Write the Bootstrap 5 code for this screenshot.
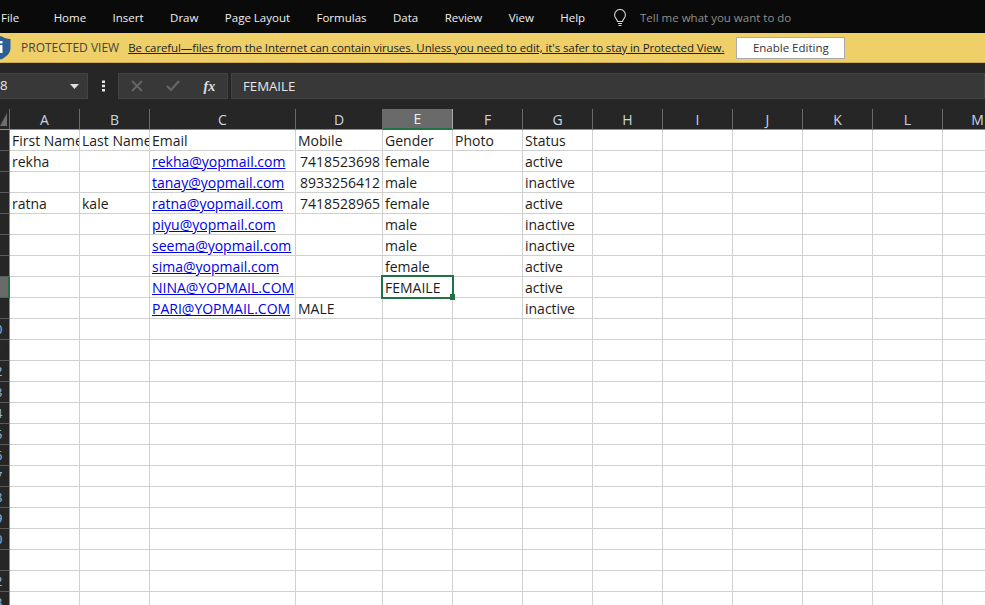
<!DOCTYPE html>
<html lang="en">
<head>
    <meta charset="UTF-8">
    <title>Excel protected view</title>
    <link href="https://cdn.jsdelivr.net/npm/bootstrap@5.3.0/dist/css/bootstrap.min.css" rel="stylesheet">
    <style>
        html, body { height: 100%; }
        body {
            background: #fff;
            overflow: hidden;
            font-family: "Open Sans", "Noto Sans", sans-serif;
        }

        /* Title / menu strip */
        .menu-strip {
            height: 33px;
            background: #0a0a0a;
            color: #f0f0f0;
            font-size: 11.5px;
            padding-left: 1px;
            padding-top: 2px;
            gap: 26.45px;
        }
        .menu-strip .first-tab { margin-right: 8px; }
        .bulb-icon { margin-left: 1.5px; margin-right: -13.5px; }
        .tell-me { color: #8f8f8f; }

        /* Protected view bar */
        .warn-bar {
            height: 30px;
            background: #efcf67;
            border-bottom: 1px solid #cfac50;
            color: #333;
            font-size: 11.5px;
        }
        .warn-bar a { color: #222; margin-left: 9px; letter-spacing: -0.11px; }
        .warn-title { color: #444; font-size: 12px; }
        .enable-btn {
            width: 109px;
            height: 22px;
            margin-left: 12px;
            padding: 0;
            background: #fff;
            border: 1px solid #ababab;
            border-radius: 0;
            color: #333;
            font-size: 11.5px;
        }
        .shield-icon { margin-left: -9px; margin-right: 10px; }

        /* Formula row */
        .formula-row {
            height: 46px;
            background: #262626;
            padding-top: 10px;
            padding-bottom: 10px;
            color: #e6e6e6;
            font-size: 13.2px;
        }
        .fbox {
            height: 26px;
            background: #383838;
            border: 1px solid #444;
        }
        .name-box { width: 89px; padding: 0 8px 0 0; margin-left: -1px; }
        .dots { width: 30px; }
        .fx-box { width: 110px; margin-right: 3px; }
        .fx-input { flex: 1; padding-left: 11px; padding-top: 1px; }
        .fx-label { font-family: "Liberation Serif", serif; font-style: italic; font-weight: bold; font-size: 14px; color: #e0e0e0; }

        /* Sheet */
        .sheet {
            table-layout: fixed;
            border-collapse: separate;
            border-spacing: 0;
            width: 1013px;
            font-size: 14px;
            color: #1c1c1c;
        }
        .col-rows { width: 10px; }
        .col-std { width: 70px; }
        .col-mail { width: 146px; }
        .col-mobile { width: 87px; }
        .sheet th, .sheet td {
            height: 21px;
            padding: 2px 0 0 2px;
            overflow: hidden;
            white-space: nowrap;
            font-weight: 400;
            line-height: 18px;
        }
        .sheet td {
            border-right: 1px solid #d0d0d0;
            border-bottom: 1px solid #d0d0d0;
        }
        .sheet thead th {
            background: #262626;
            color: #c9d6e2;
            font-size: 14px;
            text-align: center;
            padding: 2px 0 0;
            border-right: 1px solid #6a6a6a;
            border-bottom: 1px solid #8f8f8f;
        }
        .sheet thead th.col-on {
            background: #6a6a6a;
            color: #f0f0f0;
            padding-top: 1px;
            border-bottom: 2px solid #217346;
            border-right-color: #aaa;
        }
        .sheet th.corner { position: relative; }
        .corner-tri {
            position: absolute;
            left: 0;
            bottom: 3px;
            width: 0;
            height: 0;
            border-bottom: 13px solid #6e6e6e;
            border-left: 7px solid transparent;
        }
        .sheet tbody th {
            background: #262626;
            border-bottom: 1px solid #5a5a5a;
            border-right: 1px solid #8a8a8a;
            color: #8ebde0;
            font-size: 13px;
            padding: 0;
        }
        .sheet tbody th.row-on {
            background: #6a6a6a;
            border-right: 2px solid #217346;
        }
        .row-num { display: block; margin-left: -5px; width: 9px; text-align: left; }
        .row-red { color: #a33a3a; }
        .sheet a { color: #0000e6; }
        .sheet td.num { padding-left: 4px; }
        .sheet td.on-cell { position: relative; overflow: visible; }
        .cell-frame {
            position: absolute;
            left: -2px;
            top: -2px;
            width: 73px;
            height: 24px;
            border: 2px solid #217346;
        }
        .fill-grip {
            position: absolute;
            left: 67px;
            top: 17px;
            width: 5px;
            height: 6px;
            background: #217346;
        }
    </style>
</head>

<body>
    <div class="menu-strip d-flex align-items-center">
        <span class="first-tab">File</span>
        <span>Home</span>
        <span>Insert</span>
        <span>Draw</span>
        <span>Page Layout</span>
        <span>Formulas</span>
        <span>Data</span>
        <span>Review</span>
        <span>View</span>
        <span>Help</span>
        <svg class="bulb-icon" width="14" height="18" viewBox="0 0 14 18" fill="none" stroke="#d8d8d8" stroke-width="1.1">
            <path d="M4.5 12.500c0-2-2.900-3.100-2.900-6.600a5.400 5.400 0 0 1 10.800 0c0 3.500-2.900 4.600-2.900 6.600z"/>
            <path d="M5 14.500h4M5.500 16.500h3"/>
        </svg>
        <span class="tell-me">Tell me what you want to do</span>
    </div>

    <div class="warn-bar d-flex align-items-center">
        <svg class="shield-icon" width="20" height="24" viewBox="0 0 20 24">
            <path d="M10 0c3 2 6 3 9.500 3v9c0 5-4 9-9.500 11.500C4.500 21 .5 17 .5 12V3C4 3 7 2 10 0z" fill="#2a5f96"/>
            <rect x="8.500" y="9" width="3" height="8" fill="#fff"/>
            <rect x="8.500" y="5" width="3" height="2.500" fill="#fff"/>
        </svg>
        <span class="warn-title">PROTECTED VIEW</span>
        <a href="#">Be careful—files from the Internet can contain viruses. Unless you need to edit, it's safer to stay in Protected View.</a>
        <button type="button" class="btn enable-btn">Enable Editing</button>
    </div>

    <div class="formula-row d-flex">
        <div class="fbox name-box d-flex align-items-center justify-content-between">
            <span>8</span>
            <svg width="9" height="5" viewBox="0 0 9 5"><path d="M0 0h9L4.500 5z" fill="#e0e0e0"/></svg>
        </div>
        <div class="dots d-flex align-items-center justify-content-center">
            <svg width="3" height="12" viewBox="0 0 3 12" fill="#e6e6e6"><rect width="3" height="2.500" y="0.500"/><rect width="3" height="2.500" y="4.700"/><rect width="3" height="2.500" y="9"/></svg>
        </div>
        <div class="fbox fx-box d-flex align-items-center justify-content-around">
            <svg width="12" height="12" viewBox="0 0 12 12" stroke="#666" stroke-width="1.800" fill="none"><path d="M1 1l10 10M11 1L1 11"/></svg>
            <svg width="14" height="12" viewBox="0 0 14 12" stroke="#666" stroke-width="2.200" fill="none"><path d="M1 6l4 4 8-9"/></svg>
            <span class="fx-label">fx</span>
        </div>
        <div class="fbox fx-input d-flex align-items-center">FEMAILE</div>
    </div>

    <table class="sheet">
        <colgroup id="sheet-cols"></colgroup>
        <thead id="sheet-head"></thead>
        <tbody id="sheet-body"></tbody>
    </table>

    <script>
        // rows of the sheet: A, B, C (mail), D, E, F, G
        const rows = [
            ['First Name', 'Last Name', 'Email', 'Mobile', 'Gender', 'Photo', 'Status'],
            ['rekha', '', '@rekha@yopmail.com', '#7418523698', 'female', '', 'active'],
            ['', '', '@tanay@yopmail.com', '#8933256412', 'male', '', 'inactive'],
            ['ratna', 'kale', '@ratna@yopmail.com', '#7418528965', 'female', '', 'active'],
            ['', '', '@piyu@yopmail.com', '', 'male', '', 'inactive'],
            ['', '', '@seema@yopmail.com', '', 'male', '', 'inactive'],
            ['', '', '@sima@yopmail.com', '', 'female', '', 'active'],
            ['', '', '@NINA@YOPMAIL.COM', '', 'FEMAILE', '', 'active'],
            ['', '', '@PARI@YOPMAIL.COM', 'MALE', '', '', 'inactive']
        ];
        const letters = 'ABCDEFGHIJKLM'.split('');

        let cols = '<col class="col-rows">';
        letters.forEach(l => {
            cols += '<col class="' + (l === 'C' ? 'col-mail' : l === 'D' ? 'col-mobile' : 'col-std') + '">';
        });
        document.getElementById('sheet-cols').innerHTML = cols;

        let head = '<tr><th class="corner"><div class="corner-tri"></div></th>';
        letters.forEach(l => {
            head += '<th' + (l === 'E' ? ' class="col-on"' : '') + '>' + l + '</th>';
        });
        document.getElementById('sheet-head').innerHTML = head + '</tr>';

        let body = '';
        for (let r = 1; r <= 23; r++) {
            const data = rows[r - 1] || [];
            const digit = r >= 10 ? String(r % 10) : '';
            const red = (r === 11 || r === 21) ? ' row-red' : '';
            body += '<tr><th' + (r === 8 ? ' class="row-on"' : '') + '><span class="row-num' + red + '">' + digit + '</span></th>';
            letters.forEach((l, i) => {
                let v = data[i] || '';
                let cls = '';
                if (v[0] === '@') v = '<a href="#">' + v.slice(1) + '</a>';
                else if (v[0] === '#') { v = v.slice(1); cls = 'num'; }
                if (r === 8 && l === 'E') {
                    cls = 'on-cell';
                    v += '<div class="cell-frame"></div><div class="fill-grip"></div>';
                }
                body += '<td class="' + cls + '">' + v + '</td>';
            });
            body += '</tr>';
        }
        document.getElementById('sheet-body').innerHTML = body;
    </script>
    <script src="https://cdn.jsdelivr.net/npm/bootstrap@5.3.0/dist/js/bootstrap.bundle.min.js"></script>
</body>
</html>
